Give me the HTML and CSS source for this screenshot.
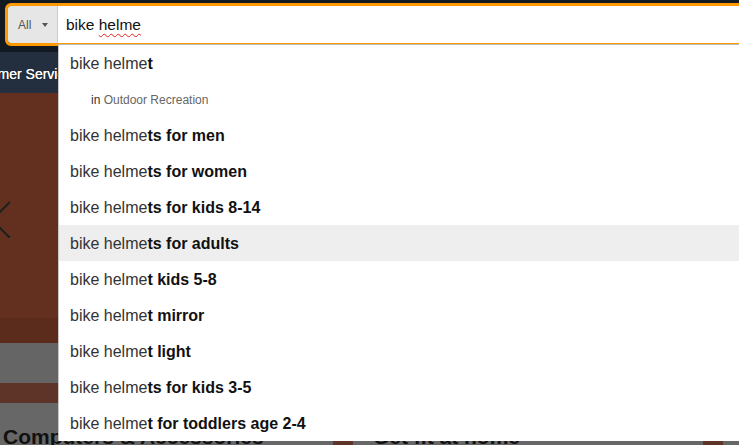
FILE: index.html
```html
<!DOCTYPE html>
<html lang="en">
<head>
<meta charset="utf-8">
<title>bike helme - search</title>
<link rel="stylesheet" href="styles.css">
</head>
<body>
<header class="nav-top">
  <form class="search">
    <div class="scope"><span class="scope-label">All</span><span class="caret"></span></div>
    <div class="field"><span class="typed">bike <span class="misspelt">helme</span></span></div>
  </form>
</header>
<nav class="subnav"><span class="sublink">Customer Service</span></nav>
<section class="hero">
  <svg class="chevron" width="14" height="44" viewBox="0 0 14 44">
    <polyline points="10,1 -8,19 10,37" fill="none" stroke="#9a9a9a" stroke-width="1" transform="translate(0,0.6)"/>
    <polyline points="10,1 -8,19 10,37" fill="none" stroke="#1d1d1d" stroke-width="2"/>
  </svg>
</section>
<div class="hero-fade"></div>
<div class="strip-gray"></div>
<section class="cards">
  <div class="card"><h2 class="card-title">Computers &amp; Accessories</h2></div>
  <div class="card"><h2 class="card-title">Get fit at home</h2></div>
  <div class="card"></div>
</section>
<ul class="suggestions">
  <li class="row">bike helme<b>t</b></li>
  <li class="row sub"><span class="in">in</span> Outdoor Recreation</li>
  <li class="row">bike helme<b>ts for men</b></li>
  <li class="row">bike helme<b>ts for women</b></li>
  <li class="row">bike helme<b>ts for kids 8-14</b></li>
  <li class="row active">bike helme<b>ts for adults</b></li>
  <li class="row">bike helme<b>t kids 5-8</b></li>
  <li class="row">bike helme<b>t mirror</b></li>
  <li class="row">bike helme<b>t light</b></li>
  <li class="row">bike helme<b>ts for kids 3-5</b></li>
  <li class="row">bike helme<b>t for toddlers age 2-4</b></li>
</ul>
</body>
</html>
```
FILE: styles.css
```css
html, body {
  margin: 0;
  padding: 0;
  overflow: hidden;
  width: 739px;
  height: 445px;
}
body {
  position: relative;
  font-family: "Liberation Sans", Arial, sans-serif;
  background: #666666;
}
.nav-top {
  height: 52px;
  background: #131921;
  padding: 3px 0 0 5px;
  box-sizing: border-box;
}
.search {
  display: flex;
  width: 780px;
  height: 43px;
  border: 3px solid #f90;
  border-radius: 6px;
  box-sizing: border-box;
  overflow: hidden;
  margin: 0;
}
.scope {
  width: 50px;
  flex: none;
  display: flex;
  align-items: center;
  box-sizing: border-box;
  padding-left: 10px;
  padding-top: 1px;
  background: #e6e6e6;
  border-right: 1px solid #cdcdcd;
  color: #555;
  font-size: 12px;
}
.caret {
  margin-left: 11px;
  width: 0;
  height: 0;
  border-top: 4px solid #555;
  border-left: 3.5px solid transparent;
  border-right: 3.5px solid transparent;
}
.field {
  flex: 1;
  background: #fff;
  display: flex;
  align-items: center;
  padding-left: 8px;
  font-size: 15.5px;
  color: #111;
}
.misspelt {
  text-decoration: underline wavy #e0201a;
  text-decoration-thickness: 1px;
  text-underline-offset: 3px;
}
.subnav {
  height: 41px;
  background: #232f3e;
  display: flex;
  align-items: center;
  white-space: nowrap;
}
.sublink {
  margin-left: -39px;
  color: #fff;
  font-size: 14px;
  padding-top: 3px;
  text-shadow: 0 0 0.4px #fff;
}
.hero {
  position: relative;
  height: 225px;
  background: #63301f;
}
.chevron {
  position: absolute;
  left: 0;
  top: 108px;
}
.hero-fade {
  height: 25px;
  background: #5b2b1c;
}
.strip-gray {
  height: 40px;
  background: #656565;
}
.cards {
  display: flex;
  gap: 20px;
  padding-top: 20px;
  margin-left: -17px;
  background: #5f3428;
}
.card {
  flex: none;
  width: 350px;
  height: 220px;
  background: #676767;
  padding: 20px 20px;
  box-sizing: border-box;
}
.card-title {
  margin: 0;
  font-size: 21px;
  line-height: 27px;
  font-weight: bold;
  color: #111;
  white-space: nowrap;
}
.suggestions {
  position: absolute;
  left: 58px;
  top: 44px;
  width: 700px;
  margin: 0;
  padding: 0;
  list-style: none;
  background: #fff;
  border-top: 1px solid #bbb;
  border-left: 1px solid #c8c8c8;
}
.row {
  height: 35px;
  line-height: 35px;
  padding-top: 1px;
  padding-left: 11px;
  font-size: 16px;
  color: #333;
  white-space: nowrap;
}
.row b {
  color: #111;
  font-weight: bold;
}
.row.active {
  background: #eeeeee;
}
.row.sub {
  height: 34px;
  line-height: 34px;
  padding-top: 2px;
  padding-left: 32px;
  font-size: 12px;
  color: #666;
}
.row.sub .in {
  color: #333;
}
```
